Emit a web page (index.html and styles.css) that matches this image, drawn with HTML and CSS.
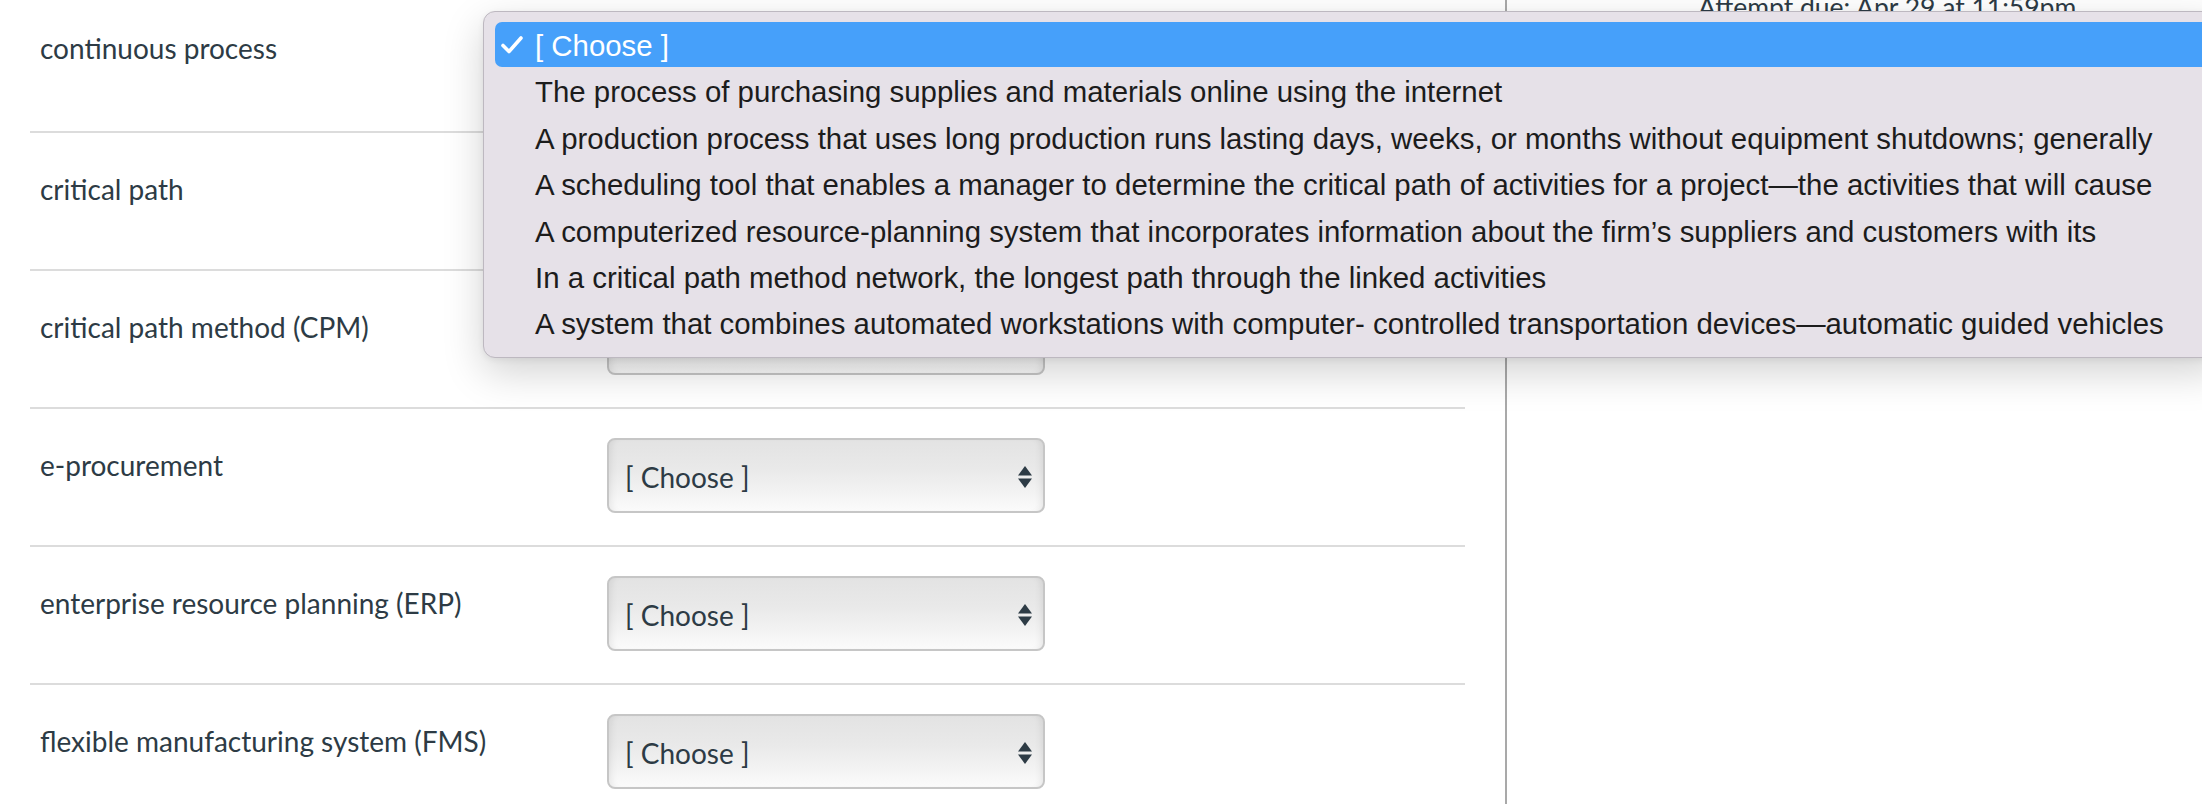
FILE: index.html
```html
<!DOCTYPE html>
<html lang="en">
<head>
<meta charset="utf-8">
<title>Quiz matching</title>
<link rel="stylesheet" href="styles.css">
</head>
<body>
<div class="page">
  <main class="quiz">
    <div class="row first">
      <div class="label">continuous process</div>
      <div class="select"><span>[ Choose ]</span><svg class="arrows" width="14" height="22" viewBox="0 0 14 22"><path d="M7 0 L14 9.5 L0 9.5 Z"/><path d="M0 12.5 L14 12.5 L7 22 Z"/></svg></div>
    </div>
    <div class="row">
      <div class="label">critical path</div>
      <div class="select"><span>[ Choose ]</span><svg class="arrows" width="14" height="22" viewBox="0 0 14 22"><path d="M7 0 L14 9.5 L0 9.5 Z"/><path d="M0 12.5 L14 12.5 L7 22 Z"/></svg></div>
    </div>
    <div class="row">
      <div class="label">critical path method (CPM)</div>
      <div class="select"><span>[ Choose ]</span><svg class="arrows" width="14" height="22" viewBox="0 0 14 22"><path d="M7 0 L14 9.5 L0 9.5 Z"/><path d="M0 12.5 L14 12.5 L7 22 Z"/></svg></div>
    </div>
    <div class="row">
      <div class="label">e-procurement</div>
      <div class="select"><span>[ Choose ]</span><svg class="arrows" width="14" height="22" viewBox="0 0 14 22"><path d="M7 0 L14 9.5 L0 9.5 Z"/><path d="M0 12.5 L14 12.5 L7 22 Z"/></svg></div>
    </div>
    <div class="row">
      <div class="label">enterprise resource planning (ERP)</div>
      <div class="select"><span>[ Choose ]</span><svg class="arrows" width="14" height="22" viewBox="0 0 14 22"><path d="M7 0 L14 9.5 L0 9.5 Z"/><path d="M0 12.5 L14 12.5 L7 22 Z"/></svg></div>
    </div>
    <div class="row">
      <div class="label">flexible manufacturing system (FMS)</div>
      <div class="select"><span>[ Choose ]</span><svg class="arrows" width="14" height="22" viewBox="0 0 14 22"><path d="M7 0 L14 9.5 L0 9.5 Z"/><path d="M0 12.5 L14 12.5 L7 22 Z"/></svg></div>
    </div>
  </main>
  <aside class="sidebar">
    <div class="due">Attempt due: Apr 29 at 11:59pm</div>
  </aside>
</div>

<div class="menu">
  <div class="item selected"><svg class="check" width="22" height="18" viewBox="0 0 22 18"><path d="M2 9.5 L8 15.5 L20 2" fill="none" stroke="#fff" stroke-width="3.6" stroke-linecap="round" stroke-linejoin="round"/></svg>[ Choose ]</div>
  <div class="item">The process of purchasing supplies and materials online using the internet</div>
  <div class="item">A production process that uses long production runs lasting days, weeks, or months without equipment shutdowns; generally</div>
  <div class="item">A scheduling tool that enables a manager to determine the critical path of activities for a project—the activities that will cause</div>
  <div class="item">A computerized resource-planning system that incorporates information about the firm’s suppliers and customers with its</div>
  <div class="item">In a critical path method network, the longest path through the linked activities</div>
  <div class="item">A system that combines automated workstations with computer- controlled transportation devices—automatic guided vehicles</div>
</div>
</body>
</html>
```

FILE: styles.css
```css
html, body {
  margin: 0;
  padding: 0;
  height: 100%;
  overflow: hidden;
  background: #ffffff;
}

body {
  font-family: Lato, "Noto Sans", sans-serif;
  color: #2d3b45;
}

.page {
  display: flex;
  height: 804px;
}

.quiz {
  width: 1435px;
  margin-left: 30px;
  margin-top: -5px;
  flex: none;
}

.row {
  display: flex;
  align-items: flex-start;
  height: 136px;
  border-bottom: 2px solid #dcdcdc;
}

.label {
  width: 567px;
  padding-left: 10px;
  padding-top: 38px;
  font-size: 28px;
  line-height: 36px;
  flex: none;
}

.row.first .label {
  padding-top: 35px;
}

.select {
  margin-top: 29px;
  width: 438px;
  height: 75px;
  box-sizing: border-box;
  border: 2px solid #c6c6c6;
  border-radius: 8px;
  background: linear-gradient(to bottom, #e3e3e3 0%, #e9e9e9 40%, #f3f3f3 75%, #fbfbfb 100%);
  box-shadow: inset 7px 0 7px -5px rgba(0, 0, 0, 0.08), inset -7px 0 7px -5px rgba(0, 0, 0, 0.08);
  display: flex;
  align-items: center;
  justify-content: space-between;
  padding: 2px 11px 0 16px;
  font-size: 28px;
  color: #2d3b45;
  flex: none;
}

.arrows {
  fill: #2d3b45;
  display: block;
}

.sidebar {
  flex: 1;
  margin-left: 40px;
  border-left: 2px solid #a9a9a9;
  padding-left: 191px;
}

.due {
  margin-top: -11px;
  font-size: 26.5px;
  line-height: 36px;
  color: #2d3b45;
  white-space: nowrap;
}

.menu {
  position: absolute;
  left: 483px;
  top: 11px;
  width: 1740px;
  box-sizing: border-box;
  padding: 10px 11px 10px 11px;
  background: #e6e1e8;
  border: 1px solid #bdb8c0;
  border-radius: 12px;
  box-shadow: 0 14px 40px rgba(0, 0, 0, 0.18), 0 2px 6px rgba(0, 0, 0, 0.06);
  overflow: hidden;
  font-family: "Liberation Sans", Arial, sans-serif;
}

.item {
  height: 46.4px;
  line-height: 46px;
  padding-left: 40px;
  padding-top: 1px;
  box-sizing: border-box;
  font-size: 29.4px;
  color: #1c1c1c;
  white-space: nowrap;
  border-radius: 7px;
  position: relative;
}

.item.selected {
  background: #46a0fa;
  color: #ffffff;
  height: 45px;
  margin-bottom: 1.4px;
}

.check {
  position: absolute;
  left: 6px;
  top: 14px;
}
```
